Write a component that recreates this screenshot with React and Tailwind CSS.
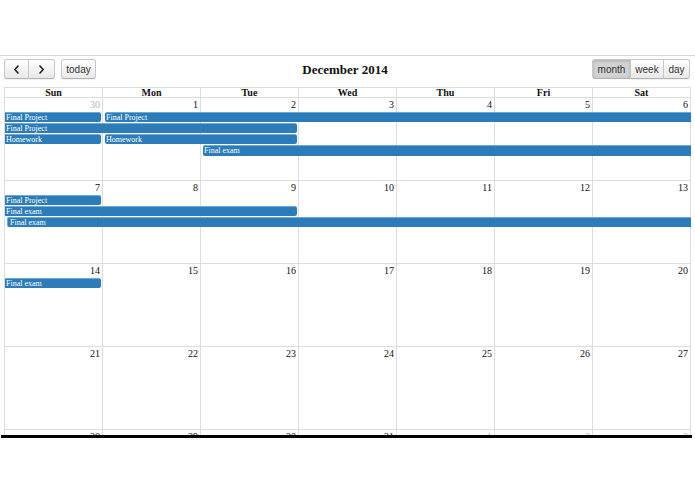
import React from 'react';

const colStart = ['', 'col-start-1', 'col-start-2', 'col-start-3', 'col-start-4', 'col-start-5', 'col-start-6', 'col-start-7'];
const colSpan = ['', 'col-span-1', 'col-span-2', 'col-span-3', 'col-span-4', 'col-span-5', 'col-span-6', 'col-span-7'];
const rowStart = ['', 'row-start-1', 'row-start-2', 'row-start-3', 'row-start-4', 'row-start-5'];

const dayNames = ['Sun', 'Mon', 'Tue', 'Wed', 'Thu', 'Fri', 'Sat'];

// each event: row, start column, span, title, isStart, isEnd
const weeks = [
  {
    days: [[30, true], [1], [2], [3], [4], [5], [6]],
    events: [
      { row: 2, col: 1, span: 1, title: 'Final Project', start: false, end: true },
      { row: 2, col: 2, span: 6, title: 'Final Project', start: true, end: false },
      { row: 3, col: 1, span: 3, title: 'Final Project', start: false, end: true },
      { row: 4, col: 1, span: 1, title: 'Homework', start: false, end: true },
      { row: 4, col: 2, span: 2, title: 'Homework', start: true, end: true },
      { row: 5, col: 3, span: 5, title: 'Final exam', start: true, end: false },
    ],
  },
  {
    days: [[7], [8], [9], [10], [11], [12], [13]],
    events: [
      { row: 2, col: 1, span: 1, title: 'Final Project', start: false, end: true },
      { row: 3, col: 1, span: 3, title: 'Final exam', start: false, end: true },
      { row: 4, col: 1, span: 7, title: 'Final exam', start: true, end: false, edge: true },
    ],
  },
  {
    days: [[14], [15], [16], [17], [18], [19], [20]],
    events: [{ row: 2, col: 1, span: 1, title: 'Final exam', start: false, end: true }],
  },
  {
    days: [[21], [22], [23], [24], [25], [26], [27]],
    events: [],
  },
  {
    days: [[28], [29], [30], [31], [1, true], [2, true], [3, true]],
    events: [],
  },
];

function EventBar({ ev }) {
  return (
    <div
      className={`${colStart[ev.col]} ${colSpan[ev.span]} ${rowStart[ev.row]} z-10 mb-[1px] overflow-hidden whitespace-nowrap bg-[#2b7cb8] border-t border-[#6aabd9] text-white text-[8px] leading-[9px] ${
        ev.start ? 'ml-[2px] rounded-l-[2px]' : 'ml-0'
      } ${ev.end ? 'mr-[2px] rounded-r-[2px]' : ''} ${ev.edge ? 'border-l pl-[2px] ml-[1px]' : 'pl-[1px]'}`}
    >
      {ev.title}
    </div>
  );
}

function Week({ week }) {
  return (
    <div className="grid grid-cols-7 grid-rows-[13.5px_11.3px_11.3px_11.3px_11.3px_1fr] h-[83px]">
      {week.days.map(([n, other], i) => (
        <div
          key={i}
          className={`${colStart[i + 1]} row-start-1 row-end-7 border-r border-b border-[#dddddd] text-right pr-[2px] pt-[2px] text-[10px] leading-[10px] ${
            other ? 'text-[#b5b5b5]' : 'text-[#111]'
          }`}
        >
          {n}
        </div>
      ))}
      {week.events.map((ev, i) => (
        <EventBar key={i} ev={ev} />
      ))}
    </div>
  );
}

function Button({ children, className = '', active }) {
  return (
    <button
      className={`h-[20px] border border-[#c8c8c8] border-b-[#b0b0b0] text-[10px] text-[#333] flex items-center justify-center ${
        active
          ? 'bg-[#d2d2d2] shadow-[inset_0_1px_3px_rgba(0,0,0,0.18)]'
          : 'bg-gradient-to-b from-white to-[#e8e8e8] shadow-[0_1px_1px_rgba(0,0,0,0.06)]'
      } ${className}`}
      style={{ fontFamily: '"Liberation Sans", Arial, sans-serif' }}
    >
      {children}
    </button>
  );
}

function Chevron({ dir }) {
  return (
    <svg width="7" height="9" viewBox="0 0 7 9" fill="none" stroke="#222" strokeWidth="1.6" strokeLinecap="round" strokeLinejoin="round">
      {dir === 'left' ? <path d="M5 1 L1.8 4.5 L5 8" /> : <path d="M2 1 L5.2 4.5 L2 8" />}
    </svg>
  );
}

export default function App() {
  return (
    <div
      className="w-[695px] h-[494px] bg-white overflow-hidden"
      style={{ fontFamily: '"Liberation Serif", "Times New Roman", serif' }}
    >
      <div className="h-[55px]" />
      <div className="h-px bg-[#d4d4d4]" />

      {/* Toolbar */}
      <div className="flex items-center h-[20px] mt-[3px] px-[4px]">
        <div className="flex-1 flex items-center">
          <Button className="w-[25px] rounded-l-[3px]">
            <Chevron dir="left" />
          </Button>
          <Button className="w-[26px] rounded-r-[3px] border-l-0">
            <Chevron dir="right" />
          </Button>
          <Button className="w-[35px] ml-[6px] rounded-[3px]">today</Button>
        </div>
        <h2 className="text-[13px] font-bold text-[#111] leading-none -ml-[4px]">December 2014</h2>
        <div className="flex-1 flex justify-end pr-[1px]">
          <Button active className="w-[39px] rounded-l-[3px]">month</Button>
          <Button className="w-[33px] border-l-0">week</Button>
          <Button className="w-[26px] rounded-r-[3px] border-l-0">day</Button>
        </div>
      </div>

      {/* Month grid */}
      <div className="ml-[4px] w-[687px] mt-[8px] h-[348px] overflow-hidden border-l border-t border-[#dddddd]">
        <div className="grid grid-cols-7 h-[10px]">
          {dayNames.map((d) => (
            <div
              key={d}
              className="border-r border-b border-[#dddddd] text-center text-[10px] font-bold leading-[9px] text-[#111]"
            >
              {d}
            </div>
          ))}
        </div>
        {weeks.map((w, i) => (
          <Week key={i} week={w} />
        ))}
      </div>
      <div className="ml-[1px] w-[691px] h-[3px] bg-black" />
    </div>
  );
}
